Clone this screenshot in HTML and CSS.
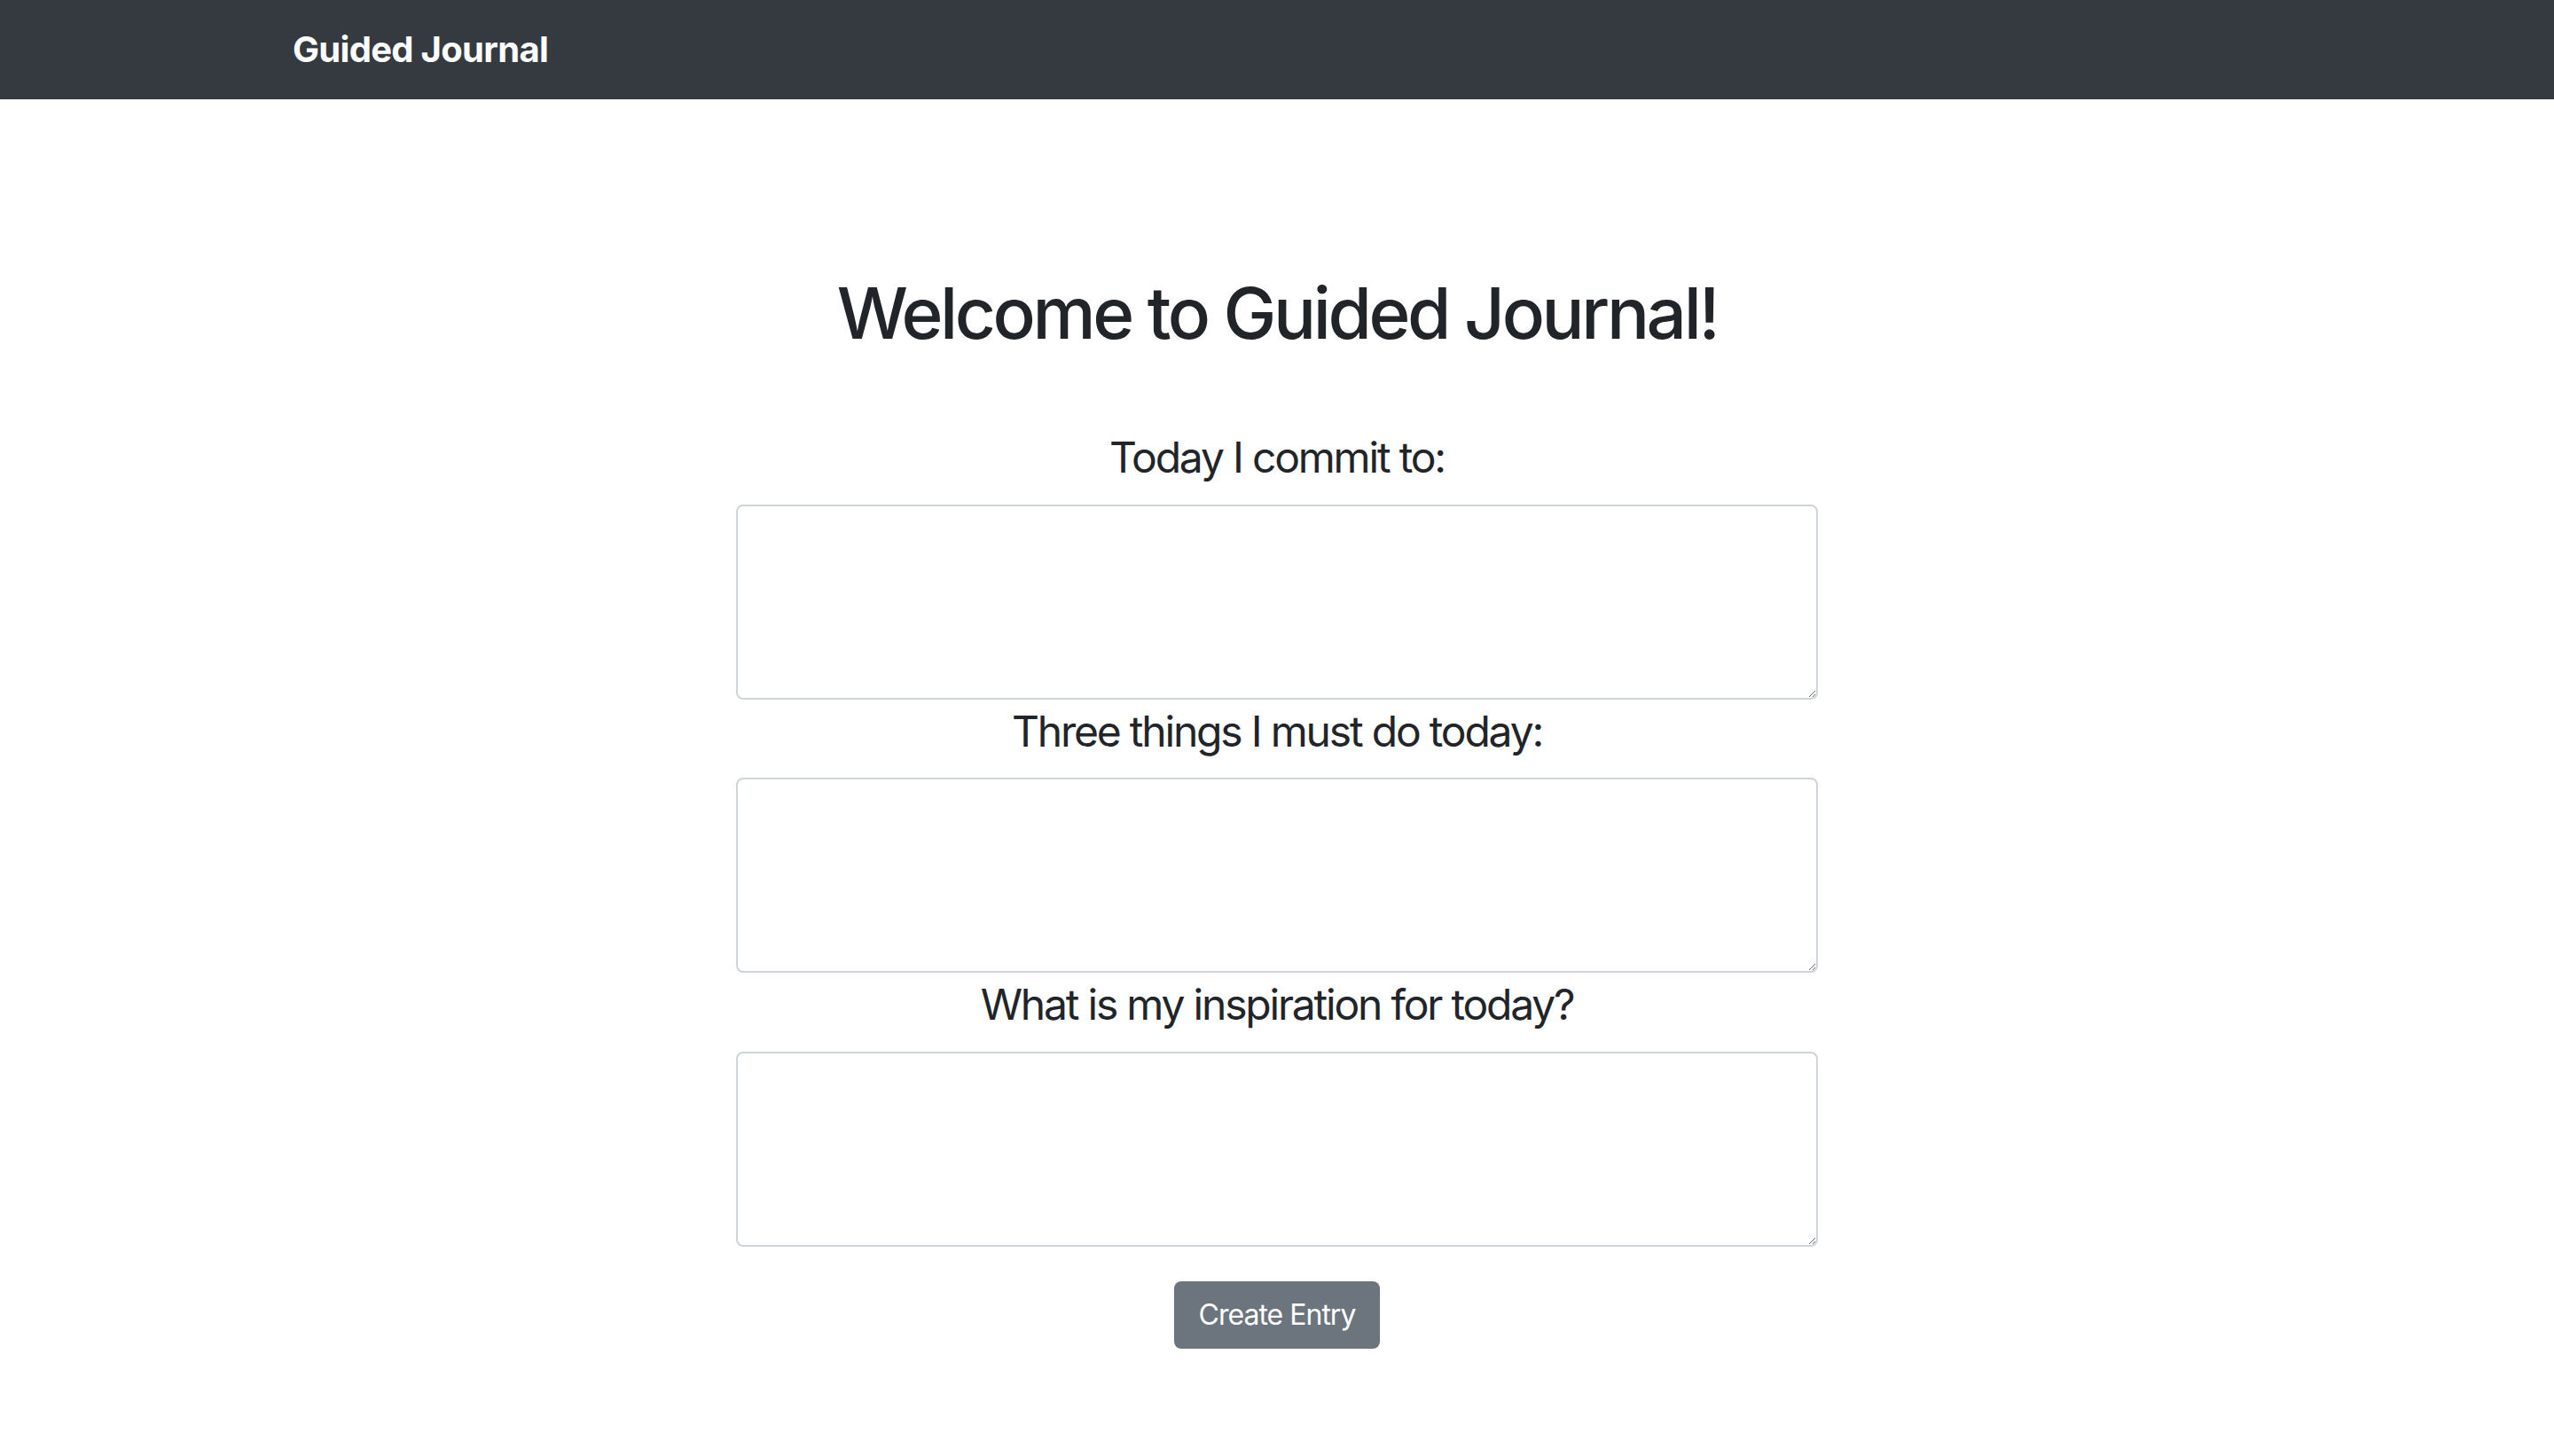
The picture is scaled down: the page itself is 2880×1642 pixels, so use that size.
FILE: index.html
```html
<!DOCTYPE html>
<html lang="en">
<head>
<meta charset="utf-8">
<title>Guided Journal</title>
<link rel="stylesheet" href="styles.css">
</head>
<body>
<nav class="navbar">
  <div class="container">
    <a class="brand" href="#">Guided Journal</a>
  </div>
</nav>
<main class="main">
  <h1 class="title">Welcome to Guided Journal!</h1>
  <form class="entry-form">
    <label class="prompt" for="commit">Today I commit to:</label>
    <textarea id="commit" class="field"></textarea>
    <label class="prompt" for="three">Three things I must do today:</label>
    <textarea id="three" class="field"></textarea>
    <label class="prompt" for="inspire">What is my inspiration for today?</label>
    <textarea id="inspire" class="field"></textarea>
    <button type="button" class="btn">Create Entry</button>
  </form>
</main>
</body>
</html>
```

FILE: styles.css
```css
* { box-sizing: border-box; }
html, body {
  margin: 0;
  padding: 0;
  background: #ffffff;
  font-family: Inter, "Liberation Sans", sans-serif;
  color: #212529;
}
.navbar {
  background: #343a40;
  height: 112px;
  display: flex;
  align-items: center;
}
.container {
  width: 2280px;
  margin: 0 auto;
  padding: 0 30px;
}
.brand {
  color: #ffffff;
  font-weight: 700;
  font-size: 40px;
  line-height: 60px;
  text-decoration: none;
  letter-spacing: -0.7px;
}
.main {
  display: flex;
  flex-direction: column;
  align-items: center;
  padding-top: 193px;
}
.title {
  margin: 0;
  font-size: 80px;
  font-weight: 500;
  line-height: 96px;
  letter-spacing: -3.4px;
}
.entry-form {
  width: 1220px;
  margin-top: 86px;
  display: flex;
  flex-direction: column;
  align-items: center;
}
.prompt {
  display: block;
  font-size: 48px;
  line-height: 57.6px;
  font-weight: 400;
  margin: 7px 0 24px;
  letter-spacing: -2.2px;
  white-space: nowrap;
}
.prompt:first-child { margin-top: 0; }
.field {
  display: block;
  width: 1220px;
  height: 220px;
  border: 2px solid #ced4da;
  border-radius: 8px;
  padding: 12px 24px;
  font-family: inherit;
  font-size: 32px;
  background: #ffffff;
}
.btn {
  margin-top: 39px;
  width: 232px;
  height: 76px;
  background: #6c757d;
  color: #ffffff;
  border: none;
  border-radius: 8px;
  font-family: inherit;
  font-size: 32px;
  padding: 0 16px;
  white-space: nowrap;
  letter-spacing: -1px;
  cursor: pointer;
}
```
